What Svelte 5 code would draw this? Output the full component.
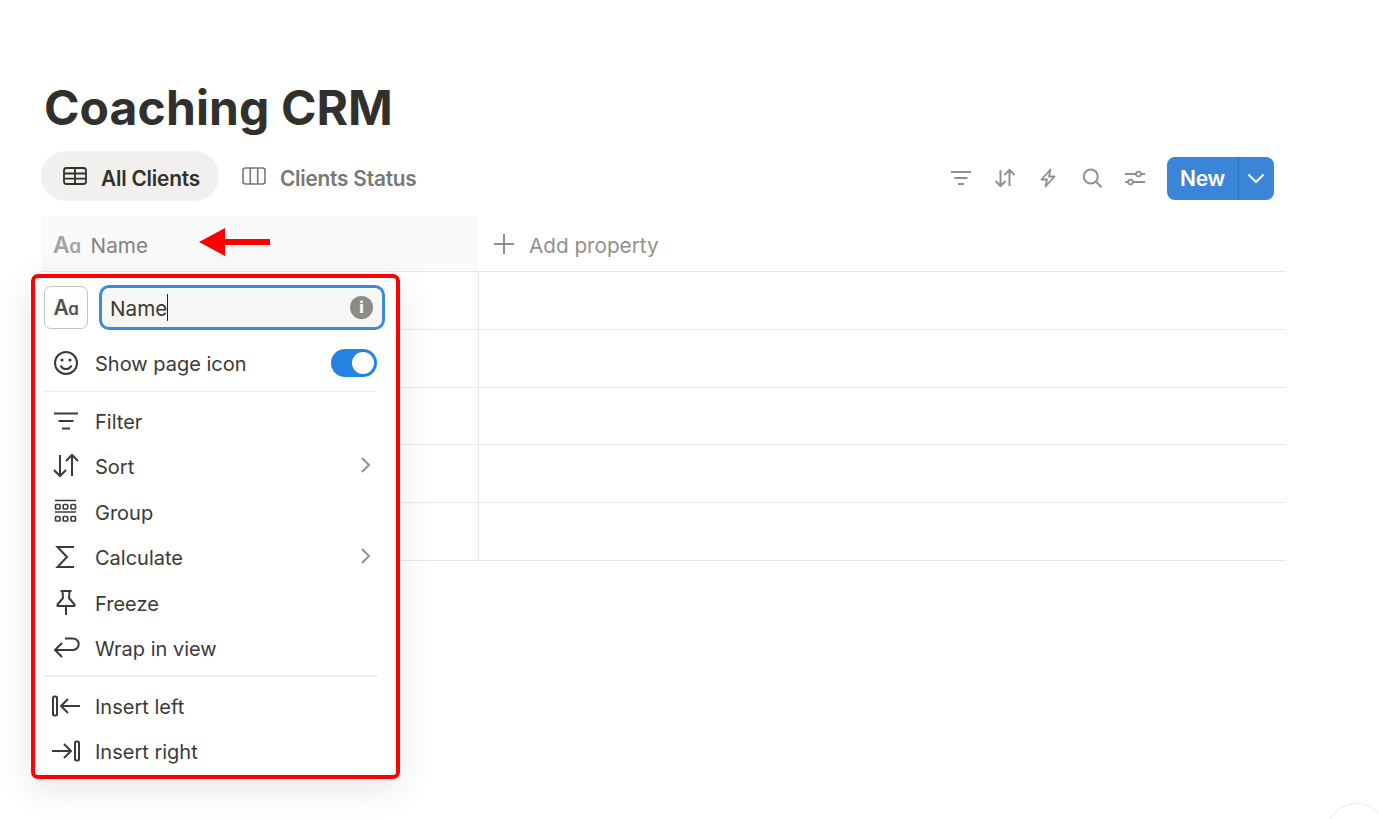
<script lang="ts">
  const rows = [0, 1, 2, 3, 4];
</script>

<main>
  <h1>Coaching CRM</h1>

  <div class="toolbar">
    <div class="tabs">
      <div class="tab active">
        <svg width="26" height="20" viewBox="0 0 26 20" fill="none" stroke="currentColor" stroke-width="1.8">
          <rect x="2" y="2" width="22" height="16" rx="2.5" />
          <path d="M2 7.5h22M2 12.7h22M13 2v16" />
        </svg>
        <span>All Clients</span>
      </div>
      <div class="tab">
        <svg width="26" height="20" viewBox="0 0 26 20" fill="none" stroke="currentColor" stroke-width="1.6">
          <rect x="2" y="2" width="22" height="16" rx="2.5" />
          <path d="M9.3 2v16M16.7 2v16" />
        </svg>
        <span>Clients Status</span>
      </div>
    </div>

    <div class="actions">
      <svg width="22" height="22" viewBox="0 0 22 22" fill="none" stroke="currentColor" stroke-width="2">
        <path d="M1 5h20M4.5 11h13M8 17h6" />
      </svg>
      <svg width="22" height="22" viewBox="0 0 22 22" fill="none" stroke="currentColor" stroke-width="2">
        <path d="M6.5 3v16M1.5 14l5 5 5-5M15.5 19V3M10.5 8l5-5 5 5" />
      </svg>
      <svg width="22" height="22" viewBox="0 0 22 22" fill="none" stroke="currentColor" stroke-width="1.8" stroke-linejoin="round">
        <path d="M13.5 2.5 4.5 12.5H10L8.5 19.5l9-10H12z" />
      </svg>
      <svg width="22" height="22" viewBox="0 0 22 22" fill="none" stroke="currentColor" stroke-width="2">
        <circle cx="9.8" cy="9.5" r="7" />
        <path d="m14.8 14.5 5.7 5.7" />
      </svg>
      <svg width="22" height="22" viewBox="0 0 22 22" fill="none" stroke="currentColor" stroke-width="1.8">
        <path d="M1 7h11M17 7h4M1 15h3M9 15h12" />
        <circle cx="14.5" cy="7" r="2.4" />
        <circle cx="6.5" cy="15" r="2.4" />
      </svg>
      <div class="new">
        <span class="new-label">New</span>
        <span class="new-caret">
          <svg width="18" height="11" viewBox="0 0 18 11" fill="none" stroke="currentColor" stroke-width="2.2">
            <path d="m1.5 1.5 7.5 7.5 7.5-7.5" />
          </svg>
        </span>
      </div>
    </div>
  </div>

  <div class="table">
    <div class="head">
      <div class="head-name">
        <span class="aa">A<small>ɑ</small></span>
        <span>Name</span>
      </div>
      <div class="head-add">
        <svg width="22" height="22" viewBox="0 0 22 22" fill="none" stroke="currentColor" stroke-width="2">
          <path d="M11 1v20M1 11h20" />
        </svg>
        <span>Add property</span>
      </div>
    </div>
    {#each rows as row (row)}
      <div class="row">
        <div class="cell-name"></div>
        <div></div>
      </div>
    {/each}
  </div>

  <svg class="arrow" width="72" height="28" viewBox="0 0 72 28" fill="#f00">
    <path d="M0 14 26 0v11h45v6H26v11z" />
  </svg>

  <div class="menu">
    <div class="rename">
      <div class="type-box"><span class="aa dark">A<small>ɑ</small></span></div>
      <div class="name-input">
        <span class="value">Name</span><span class="cursor"></span>
        <span class="info">i</span>
      </div>
    </div>

    <div class="item toggle-item">
      <svg width="28" height="28" viewBox="0 0 28 28" fill="none" stroke="currentColor" stroke-width="2">
        <circle cx="14" cy="14" r="11" />
        <circle cx="10" cy="11" r="1.6" fill="currentColor" stroke="none" />
        <circle cx="18" cy="11" r="1.6" fill="currentColor" stroke="none" />
        <path d="M8.5 16.5c1.2 2.4 3.2 3.6 5.5 3.6s4.3-1.200 5.500-3.600" />
      </svg>
      <span>Show page icon</span>
      <span class="toggle"><i></i></span>
    </div>
    <hr />

    <div class="item">
      <svg width="28" height="28" viewBox="0 0 28 28" fill="none" stroke="currentColor" stroke-width="2">
        <path d="M2 6.5h24M6.500 14h15M10 21.500h8" />
      </svg>
      <span>Filter</span>
    </div>
    <div class="item">
      <svg width="28" height="28" viewBox="0 0 28 28" fill="none" stroke="currentColor" stroke-width="2">
        <path d="M8 3v21M2 18l6 6 6-6M20 24V3M14 9l6-6 6 6" />
      </svg>
      <span>Sort</span>
      <svg class="chev" width="12" height="18" viewBox="0 0 12 18" fill="none" stroke="currentColor" stroke-width="2">
        <path d="m2 2 7 7-7 7" />
      </svg>
    </div>
    <div class="item">
      <svg width="28" height="28" viewBox="0 0 28 28" fill="none" stroke="currentColor" stroke-width="1.6">
        <path d="M3 2.5h21M3 14h21" />
        <rect x="3.5" y="6.5" width="4.5" height="4.5" rx=".8" />
        <rect x="11.2" y="6.5" width="4.5" height="4.5" rx=".8" />
        <rect x="19" y="6.5" width="4.5" height="4.5" rx=".8" />
        <rect x="3.5" y="18.5" width="4.5" height="4.5" rx=".8" />
        <rect x="11.2" y="18.5" width="4.5" height="4.5" rx=".8" />
        <rect x="19" y="18.5" width="4.5" height="4.5" rx=".8" />
      </svg>
      <span>Group</span>
    </div>
    <div class="item">
      <svg width="28" height="28" viewBox="0 0 28 28" fill="none" stroke="currentColor" stroke-width="2">
        <path d="M22 4H5.5L15 14 5.5 24H22" />
      </svg>
      <span>Calculate</span>
      <svg class="chev" width="12" height="18" viewBox="0 0 12 18" fill="none" stroke="currentColor" stroke-width="2">
        <path d="m2 2 7 7-7 7" />
      </svg>
    </div>
    <div class="item">
      <svg width="28" height="28" viewBox="0 0 28 28" fill="none" stroke="currentColor" stroke-width="2" stroke-linejoin="round">
        <path d="M8.5 2h11M10.5 2l.5 7-5.5 6.5V17h17v-1.5L17 9l.5-7M14 17v9" />
      </svg>
      <span>Freeze</span>
    </div>
    <div class="item">
      <svg width="28" height="28" viewBox="0 0 28 28" fill="none" stroke="currentColor" stroke-width="2">
        <path d="M10 9l-7 7 7 7" />
        <path d="M3 16h18a5.7 5.7 0 0 0 0-11.4H13" />
      </svg>
      <span>Wrap in view</span>
    </div>
    <hr class="second" />

    <div class="item">
      <svg width="28" height="28" viewBox="0 0 28 28" fill="none" stroke="currentColor" stroke-width="2">
        <rect x="1" y="4.5" width="4" height="19" rx="1.5" />
        <path d="M28 14H9M16 7l-7 7 7 7" />
      </svg>
      <span>Insert left</span>
    </div>
    <div class="item">
      <svg width="28" height="28" viewBox="0 0 28 28" fill="none" stroke="currentColor" stroke-width="2">
        <rect x="23" y="4.5" width="4" height="19" rx="1.5" />
        <path d="M0 14h19M12 7l7 7-7 7" />
      </svg>
      <span>Insert right</span>
    </div>
  </div>

  <div class="corner"></div>
</main>

<style>
  :global(body) {
    margin: 0;
    font-family: Inter, "Liberation Sans", sans-serif;
    color: #37352f;
    background: #fff;
  }

  main {
    position: relative;
    height: 819px;
    overflow: hidden;
    padding: 79px 93px 0 41px;
    box-sizing: border-box;
  }

  h1 {
    margin: 0 0 0 3px;
    font-size: 48px;
    line-height: 58px;
    font-weight: 700;
    letter-spacing: 0.1px;
    color: #32302c;
  }

  .toolbar {
    display: flex;
    justify-content: space-between;
    align-items: center;
    height: 50px;
    margin-top: 14px;
    padding-right: 12px;
  }

  .tabs {
    display: flex;
    gap: 1px;
  }

  .tab {
    display: flex;
    align-items: center;
    gap: 13px;
    height: 50px;
    padding: 0 19px 0 21px;
    border-radius: 25px;
    font-size: 20.8px;
    font-weight: 600;
    letter-spacing: -0.2px;
    color: #787774;
  }

  .tab span {
    padding-top: 5px;
  }

  .tab.active {
    background: #f1f0ee;
    color: #32302c;
  }

  .actions {
    display: flex;
    align-items: center;
    gap: 21.5px;
    padding-top: 4px;
    color: #91908d;
  }

  .new {
    display: flex;
    height: 43px;
    margin-left: -1px;
    border-radius: 8px;
    overflow: hidden;
    background: #3a85d8;
    color: #fff;
    font-size: 21px;
    font-weight: 600;
    letter-spacing: -0.2px;
  }

  .new-label {
    display: flex;
    align-items: center;
    padding: 0 13px;
    border-right: 1px solid #2f73bf;
  }

  .new-caret {
    display: flex;
    align-items: center;
    padding: 0 9px 0 8px;
  }

  .table {
    margin-top: 15px;
  }

  .head {
    display: flex;
    height: 56px;
    border-bottom: 1px solid #e6e6e4;
    box-sizing: border-box;
    color: #83827e;
    font-size: 20.7px;
  }

  .head-name {
    display: flex;
    align-items: center;
    gap: 10px;
    width: 437px;
    padding: 3px 0 0 12px;
    box-sizing: border-box;
    background: #fafafa;
  }

  .head-add {
    display: flex;
    align-items: center;
    gap: 14px;
    padding-left: 15px;
    color: #91908c;
  }

  .head-add span {
    padding-top: 4px;
  }

  .aa {
    font-size: 23px;
    font-weight: 600;
    letter-spacing: -0.5px;
    color: #a4a3a0;
  }

  .aa small {
    font-size: 19px;
  }

  .aa.dark {
    color: #55534f;
    font-size: 21px;
  }

  .aa.dark small {
    font-size: 17px;
  }

  .row {
    display: flex;
    height: 57.8px;
    border-bottom: 1px solid #e9e9e7;
    box-sizing: border-box;
  }

  .cell-name {
    width: 438px;
    border-right: 1px solid #e9e9e7;
    box-sizing: border-box;
  }

  .arrow {
    position: absolute;
    left: 199px;
    top: 228px;
  }

  .menu {
    position: absolute;
    left: 31px;
    top: 274px;
    width: 369px;
    height: 505px;
    padding: 7px 19px 0 9px;
    box-sizing: border-box;
    border: 4px solid #f00;
    border-radius: 7px;
    background: #fff;
    box-shadow: 0 10px 36px rgba(15, 15, 15, 0.1);
    font-size: 20px;
    color: #3b3a36;
  }

  .rename {
    display: flex;
    align-items: center;
    gap: 11px;
    height: 44px;
    margin-right: -8px;
  }

  .type-box {
    display: flex;
    align-items: center;
    justify-content: center;
    width: 44px;
    height: 43px;
    flex: none;
    box-sizing: border-box;
    border: 1px solid #c4c4c2;
    border-radius: 7px;
  }

  .name-input {
    position: relative;
    display: flex;
    align-items: center;
    flex: 1;
    height: 45px;
    padding-left: 8px;
    box-sizing: border-box;
    border: 3px solid #3a8bdd;
    border-radius: 10px;
    background: #f6f6f4;
    font-size: 20.7px;
  }

  .value {
    padding-top: 2px;
  }

  .cursor {
    width: 1px;
    height: 27px;
    background: #222;
  }

  .info {
    position: absolute;
    right: 9px;
    top: 8px;
    width: 23px;
    height: 23px;
    border-radius: 50%;
    background: #8c8b88;
    color: #fff;
    font-size: 16px;
    font-weight: 800;
    line-height: 23px;
    text-align: center;
  }

  .item {
    display: flex;
    align-items: center;
    gap: 15px;
    height: 45.5px;
    padding-left: 7px;
  }

  .item > span:not(.toggle) {
    padding-top: 2px;
  }

  .item > svg:first-child {
    flex: none;
    margin-left: 1px;
    overflow: visible;
  }

  .toggle-item {
    margin-top: 10px;
    height: 48px;
  }

  .chev {
    margin: 0 5px 2px auto;
    color: #94938f;
  }

  .toggle {
    display: flex;
    align-items: center;
    justify-content: flex-end;
    width: 46px;
    height: 28px;
    margin-left: auto;
    padding: 0 3px;
    box-sizing: border-box;
    border-radius: 14px;
    background: #2383e2;
  }

  .toggle i {
    width: 22px;
    height: 22px;
    border-radius: 50%;
    background: #fff;
  }

  hr {
    margin: 4px 0 6px;
    border: 0;
    height: 1px;
    background: #ececea;
  }

  hr.second {
    margin: 4px 0 6px;
    height: 2px;
  }

  .corner {
    position: absolute;
    left: 1325px;
    top: 803px;
    width: 64px;
    height: 64px;
    border: 1px solid #ececea;
    border-radius: 50%;
    box-sizing: border-box;
  }
</style>
